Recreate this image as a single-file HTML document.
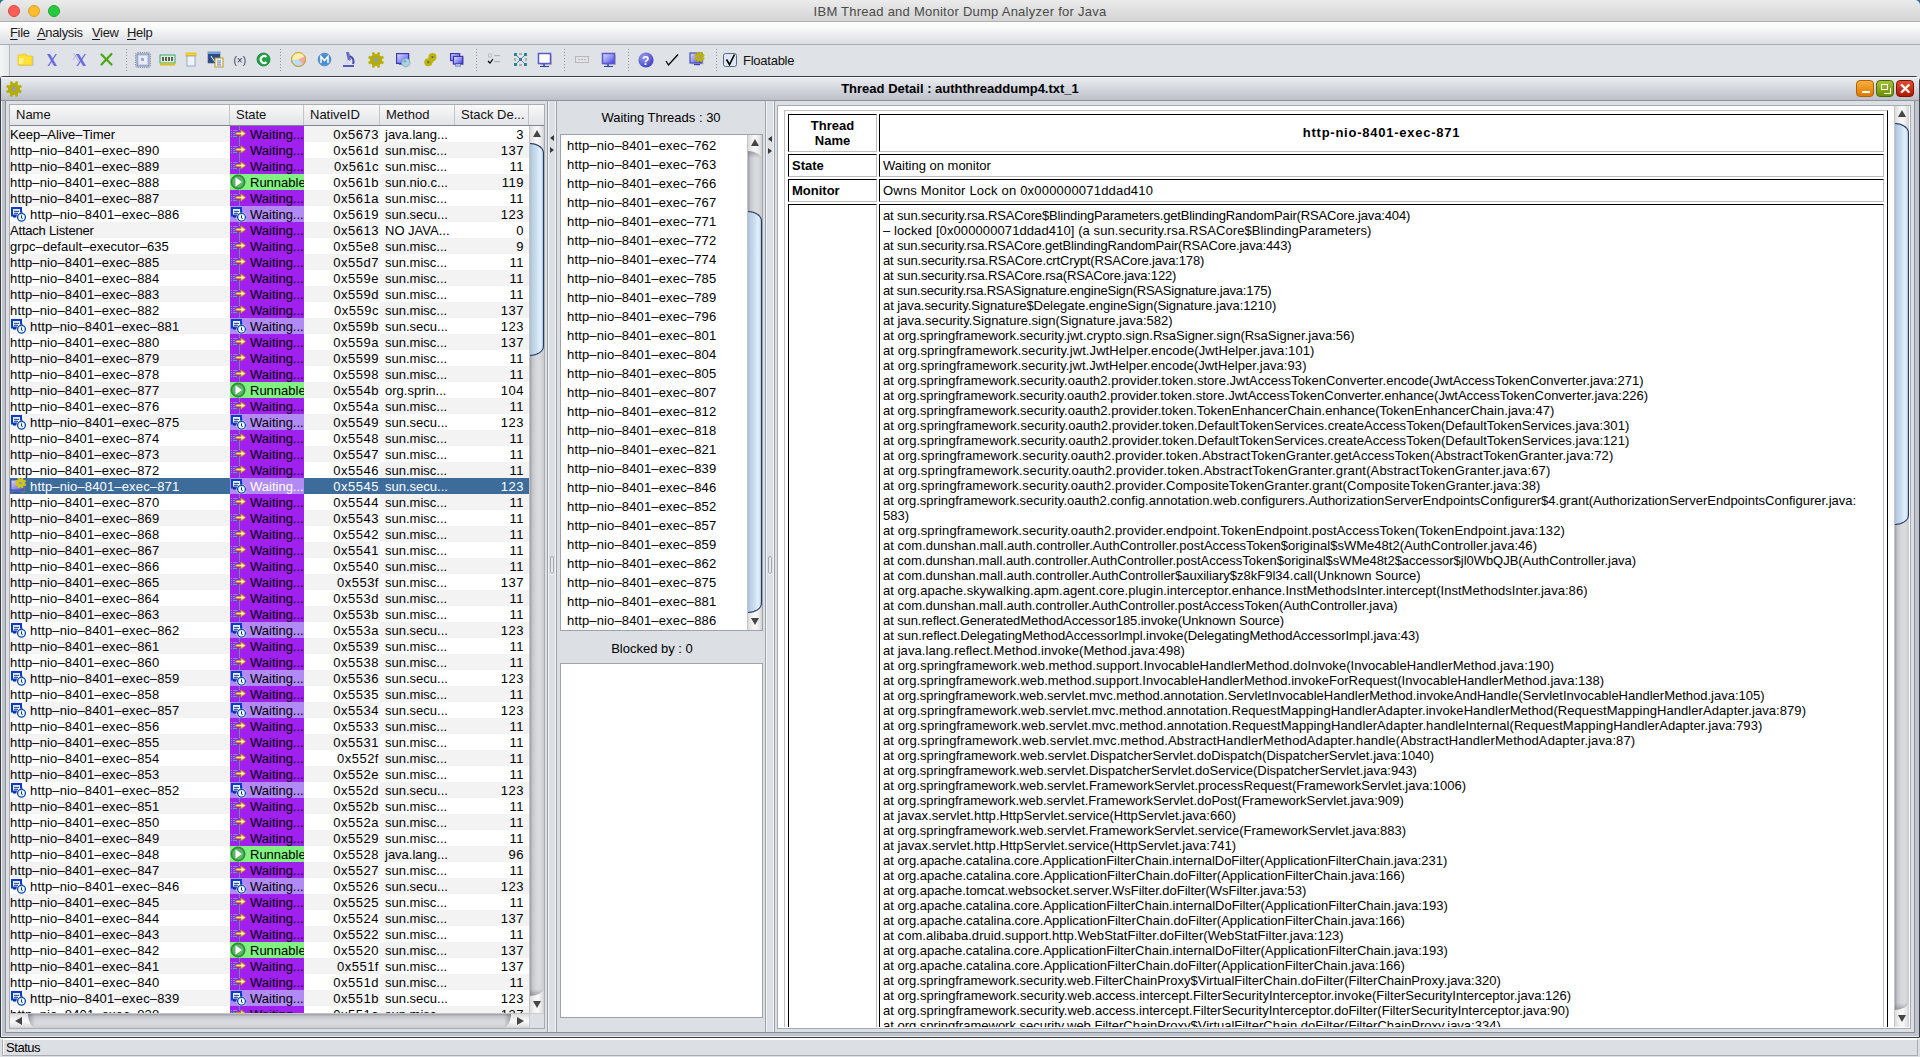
<!DOCTYPE html>
<html><head><meta charset="utf-8"><title>IBM Thread and Monitor Dump Analyzer for Java</title>
<style>
*{margin:0;padding:0;box-sizing:border-box}
html,body{width:1920px;height:1057px;overflow:hidden}
body{position:relative;background:#dfe1e6;font-family:"Liberation Sans",sans-serif;font-size:13px;color:#000}
.a{position:absolute}
#titlebar{left:0;top:0;width:1920px;height:22px;border-radius:5px 5px 0 0;background:linear-gradient(#ebebeb,#d4d4d4);border-bottom:1px solid #b0b0b0}
#titlebar .t{left:0;width:1920px;top:5px;text-align:center;color:#4a4a4a;font-size:13px;letter-spacing:0.25px;line-height:14px}
.tl{position:absolute;top:5px;width:12px;height:12px;border-radius:50%}
#menubar{left:0;top:22px;width:1920px;height:23px;background:linear-gradient(#fdfdfd 0%,#fafafa 25%,#e8eaed 65%,#dcdfe4 100%);border-bottom:1px solid #a9acb2}
.mi{position:absolute;top:3px;line-height:16px;color:#1a1a1a;letter-spacing:-0.35px}
.mi u{text-decoration:underline;text-underline-offset:2px}
#toolbar{left:0;top:45px;width:1920px;height:31px;background:#dfe2e6}
.tsep{position:absolute;top:5px;width:1px;height:22px;background-image:linear-gradient(#8a8e96 50%,transparent 50%);background-size:1px 3px}
.ti{position:absolute;top:7px;width:16px;height:16px}
#frame{left:0;top:76px;width:1920px;height:962px;border:1px solid #3a3d44;border-top-right-radius:5px;border-top-left-radius:3px;background:#dcdfe4}
#fin{left:1px;top:77px;width:1918px;height:960px;background:#bfc3cb;border-left:1px solid #eceef1;border-bottom:1px solid #e8eaee}
#panel{left:5px;top:100px;width:1910px;height:933px;border:1px solid #8a8f98;background:#dcdfe4;border-top-color:#8f949c}
#ftitle{left:1px;top:77px;width:1918px;height:24px;background:linear-gradient(#e9ebef 0%,#d5d8de 45%,#bcc0c9 100%);border-bottom:1px solid #8f949c;border-top:1px solid #f6f7f9}
#ftitle .t{left:0;width:1918px;top:3px;text-align:center;font-weight:bold;line-height:15px}
.fb{position:absolute;top:80px;width:18px;height:17px;border-radius:4px}
/* table */
#lpane{left:9px;top:104px;width:536px;height:925px;border:1px solid #a8acb3;background:#fff}
#thead{left:10px;top:105px;width:534px;height:21px;background:linear-gradient(#fafafa,#f0f0f2 40%,#e2e4e7);border-bottom:1px solid #80858e}
.th{position:absolute;top:0;height:20px;line-height:19px;padding-left:6px;border-right:1px solid #c4c4c4;color:#111}
#tbody{position:absolute;left:10px;top:126px;width:519px;height:887px;overflow:hidden;background:#fff}
.row{position:absolute;left:0;width:519px;height:16px}
.c{position:absolute;top:0;height:16px;line-height:18px;white-space:nowrap;overflow:hidden}
.g{background:#f3f3f3}.wh{background:#fff}
.cn{left:0;width:220px;letter-spacing:0.15px}
.cs{left:220px;width:74px}
.ci{left:294px;width:76px;text-align:right;padding-right:1px;letter-spacing:0.5px}
.cm{left:370px;width:75px}
.cd{left:445px;width:74px;text-align:right;padding-right:5px;letter-spacing:0.5px}
.nt{padding-left:0px}
.nt2{position:absolute;left:20px}
.ico{position:absolute;left:0;top:0}
.sw{background:#a020f0}.sr{background:#80f280}.sm{background:#b18af5}
.sico{position:absolute;left:0;top:0}
.st{position:absolute;left:20px}
.mt{padding-left:5px}
.sel .c{background:#3d6c9a;color:#fff}
.sel .cs{background:#b18af5;color:#fff}
#vsb{left:529px;top:126px;width:15px;height:887px;background:linear-gradient(90deg,#c9ccd1,#eceef0 30%,#f4f4f6 60%,#d9dbdf)}
#hsb{left:10px;top:1013px;width:519px;height:15px;background:linear-gradient(#c9ccd1,#eceef0 30%,#f4f4f6 60%,#d9dbdf)}
#corner{left:529px;top:1013px;width:15px;height:15px;background:#dcdfe4;border-left:1px solid #c8cbd0;border-top:1px solid #c8cbd0}
.thumbv{position:absolute;left:0;width:15px;border:1px solid #2e3f63;border-left:none;border-radius:0 8px 8px 0/0 10px 10px 0;background:linear-gradient(90deg,#a9c0db,#c9dcef 30%,#e4f0fb 70%,#bcd2ea)}
.arr{position:absolute;width:0;height:0}
/* dividers */
.dv{position:absolute;width:1px;background:#9da1a9}
/* middle */
#wtitle{left:556px;top:110px;width:210px;text-align:center;line-height:16px}
#wbox{left:560px;top:134px;width:203px;height:497px;border:1px solid #9ea2aa;background:#fff}
#wlist{position:absolute;left:561px;top:136px;width:186px;height:495px;overflow:hidden}
.li{position:absolute;left:6px;height:19px;line-height:20px;letter-spacing:0.15px;white-space:nowrap}
#btitle{left:537px;top:641px;width:230px;text-align:center;line-height:16px}
#bbox{left:560px;top:663px;width:203px;height:355px;border:1px solid #9ea2aa;background:#fff}
/* right */
#rpane{left:777px;top:105px;width:1134px;height:924px;border:1px solid #a4a8b0;background:#fff}
#rtable{left:785px;top:110px;width:1103px;height:930px;border-top:1px solid #c8c8c8;border-left:1px solid #c8c8c8;border-right:1px solid #000}
.cell{position:absolute;border-top:1px solid #000;border-left:1px solid #000;border-right:1px solid #bdbdbd;border-bottom:1px solid #bdbdbd}
#stack{position:absolute;left:105px;top:102px;width:1000px;height:1000px}
.sl{position:absolute;left:0;height:15px;line-height:15px;white-space:nowrap}
#rvsb{left:1894px;top:106px;width:15px;height:922px;background:linear-gradient(90deg,#c9ccd1,#eceef0 30%,#f4f4f6 60%,#d9dbdf)}
/* status */
#status{left:0;top:1038px;width:1920px;height:19px;background:#dcdfe4;border-top:1px solid #fff}
#status .box{left:2px;top:0;width:1916px;height:17px;border-left:1px solid #a8acb2;border-top:1px solid #fff;border-right:1px solid #a8acb2;border-bottom:1px solid #a8acb2;box-shadow:inset 1px 0 0 #fff}

</style></head><body>
<svg width="0" height="0" style="position:absolute">
<defs>
<linearGradient id="gor" x1="0" y1="0" x2="0" y2="1"><stop offset="0" stop-color="#fff4c0"/><stop offset="1" stop-color="#e8a010"/></linearGradient>
<symbol id="iwait" viewBox="0 0 16 16">
<path d="M9.5 0 V4.5 M9.5 10 V16" stroke="#6a8aa0" stroke-width="1"/>
 <g fill="#58a8d8"><rect x="1" y="4" width="1" height="1"/><rect x="1" y="6" width="1" height="1"/><rect x="1" y="8" width="1" height="1"/><rect x="1" y="10" width="1" height="1"/></g>
 <g fill="#58a8b0"><rect x="3" y="4" width="4" height="1"/><rect x="3" y="6" width="2" height="1"/><rect x="3" y="8" width="2" height="1"/><rect x="3" y="10" width="4" height="1"/></g>
 <path d="M6 6.5 H11 V4 L15.5 7.5 L11 11 V8.5 H6 Z" fill="#fff4b8" stroke="#d08800" stroke-width="1" stroke-linejoin="miter"/>
</symbol>
<symbol id="irun" viewBox="0 0 16 16">
 <circle cx="8" cy="8" r="7" fill="#3c9a4a" stroke="#2a7a36" stroke-width="1"/>
 <circle cx="8" cy="8" r="5.5" fill="#5cb864"/>
 <path d="M5.5 3.5 L12 8 L5.5 12.5 Z" fill="#fff"/>
</symbol>
<symbol id="imon" viewBox="0 0 16 16">
<rect x="2" y="2" width="9" height="7.5" fill="#e4fcff" stroke="#0a3ccc" stroke-width="2"/>
 <rect x="3" y="10" width="3.5" height="1.5" fill="#0a2a9a"/>
 <rect x="4" y="4.8" width="5" height="1" fill="#2a2a88"/><rect x="4" y="6.8" width="4" height="1" fill="#2a2a88"/>
 <circle cx="11.5" cy="11.3" r="5" fill="#fff"/>
 <path d="M10.2 5.8 L12.8 8.2 M12.8 5.8 L10.2 8.2" stroke="#0a48a8" stroke-width="0.9"/>
 <circle cx="11.5" cy="11.3" r="3.9" fill="#eefaff" stroke="#0a48a8" stroke-width="1.3"/>
 <path d="M11.5 9.3 V11.9 L12.6 13" stroke="#0a2a80" stroke-width="1" fill="none"/>
</symbol>
<symbol id="iselmon" viewBox="0 0 16 16">
<rect x="2" y="3" width="13" height="12" fill="#888" opacity="0.35"/>
 <defs><linearGradient id="gscr" x1="0" y1="0" x2="1" y2="1"><stop offset="0" stop-color="#e0e0ff"/><stop offset="0.6" stop-color="#8a8af0"/><stop offset="1" stop-color="#5050d8"/></linearGradient></defs>
 <rect x="1" y="2" width="12" height="10" fill="url(#gscr)" stroke="#4848c0" stroke-width="1"/>
 <rect x="6" y="12" width="2" height="2" fill="#4a60c0"/><rect x="3" y="14" width="8" height="1" fill="#2a50c8"/>
 <circle cx="10.5" cy="5" r="4.2" fill="#d0c818"/>
 <rect x="9.4" y="-0.5999999999999996" width="2.2" height="5.6" fill="#d0c818" transform="rotate(22.5 10.5 5)"/>
 <rect x="9.4" y="-0.5999999999999996" width="2.2" height="5.6" fill="#d0c818" transform="rotate(67.5 10.5 5)"/>
 <rect x="9.4" y="-0.5999999999999996" width="2.2" height="5.6" fill="#d0c818" transform="rotate(112.5 10.5 5)"/>
 <rect x="9.4" y="-0.5999999999999996" width="2.2" height="5.6" fill="#d0c818" transform="rotate(157.5 10.5 5)"/>
 <rect x="9.4" y="-0.5999999999999996" width="2.2" height="5.6" fill="#d0c818" transform="rotate(202.5 10.5 5)"/>
 <rect x="9.4" y="-0.5999999999999996" width="2.2" height="5.6" fill="#d0c818" transform="rotate(247.5 10.5 5)"/>
 <rect x="9.4" y="-0.5999999999999996" width="2.2" height="5.6" fill="#d0c818" transform="rotate(292.5 10.5 5)"/>
 <rect x="9.4" y="-0.5999999999999996" width="2.2" height="5.6" fill="#d0c818" transform="rotate(337.5 10.5 5)"/>
 <circle cx="10.5" cy="5" r="1.3" fill="#8a90c0"/>
</symbol>
<symbol id="igear" viewBox="0 0 16 16">
 <circle cx="8" cy="8" r="6" fill="#b5ad00"/>
 <rect x="6.7" y="0" width="2.6" height="8" fill="#b5ad00" transform="rotate(22.5 8 8)"/>
 <rect x="6.7" y="0" width="2.6" height="8" fill="#b5ad00" transform="rotate(67.5 8 8)"/>
 <rect x="6.7" y="0" width="2.6" height="8" fill="#b5ad00" transform="rotate(112.5 8 8)"/>
 <rect x="6.7" y="0" width="2.6" height="8" fill="#b5ad00" transform="rotate(157.5 8 8)"/>
 <rect x="6.7" y="0" width="2.6" height="8" fill="#b5ad00" transform="rotate(202.5 8 8)"/>
 <rect x="6.7" y="0" width="2.6" height="8" fill="#b5ad00" transform="rotate(247.5 8 8)"/>
 <rect x="6.7" y="0" width="2.6" height="8" fill="#b5ad00" transform="rotate(292.5 8 8)"/>
 <rect x="6.7" y="0" width="2.6" height="8" fill="#b5ad00" transform="rotate(337.5 8 8)"/>
 <rect x="6.0" y="6.0" width="4" height="4" fill="#9a9ca4"/>
</symbol>
</defs>
</svg>
<div class="a" style="left:0;top:0;width:6px;height:6px;background:#2a6896"></div><div class="a" style="left:1914px;top:0;width:6px;height:6px;background:#2a6896"></div>
<div id="titlebar" class="a">
 <div class="tl" style="left:8px;background:#fc5f57;border:1px solid #e0443e"></div>
 <div class="tl" style="left:28px;background:#fdbc2e;border:1px solid #dea123"></div>
 <div class="tl" style="left:48px;background:#28c840;border:1px solid #1aab29"></div>
 <div class="a t">IBM Thread and Monitor Dump Analyzer for Java</div>
</div>
<div id="menubar" class="a">
 <div class="mi" style="left:10px"><u>F</u>ile</div>
 <div class="mi" style="left:37px"><u>A</u>nalysis</div>
 <div class="mi" style="left:92px"><u>V</u>iew</div>
 <div class="mi" style="left:127px"><u>H</u>elp</div>
</div>
<div id="toolbar" class="a">
 <div class="a" style="left:0;top:0;width:10px;height:31px;background:linear-gradient(90deg,#f4f5f7,#e6e8eb);border-right:1px solid #b4b8c0"></div>
</div>
<div id="frame" class="a"></div>
<div id="fin" class="a"></div>
<div id="panel" class="a"></div>
<div id="ftitle" class="a">
 <svg class="a" style="left:5px;top:3px" width="16" height="16"><use href="#igear"/></svg>
 <div class="a t">Thread Detail : auththreaddump4.txt_1</div>
</div>
<div class="fb" style="left:1856px;background:linear-gradient(#f4b040,#e07a00);border:1px solid #b06000"><div class="a" style="left:5px;top:10px;width:8px;height:2px;background:#fff"></div></div>
<div class="fb" style="left:1876px;background:linear-gradient(#a8c040,#6a9000);border:1px solid #4a6a00"><div class="a" style="left:4px;top:3px;width:7px;height:6px;border:1.5px solid #fff"></div><div class="a" style="left:7px;top:7px;width:7px;height:6px;border-right:1.5px solid #fff;border-bottom:1.5px solid #fff"></div></div>
<div class="fb" style="left:1896px;background:linear-gradient(#e05030,#b01800);border:1px solid #801000;color:#fff;font-weight:bold;font-size:15px;line-height:15px;text-align:center">&#x2715;</div>

<div id="lpane" class="a"></div>
<div id="thead" class="a">
 <div class="th" style="left:0;width:220px">Name</div>
 <div class="th" style="left:220px;width:74px">State</div>
 <div class="th" style="left:294px;width:76px">NativeID</div>
 <div class="th" style="left:370px;width:75px">Method</div>
 <div class="th" style="left:445px;width:74px">Stack De...</div>
</div>
<div class="a" style="left:529px;top:126px;width:15px;height:887px;background:linear-gradient(90deg,#dcdcdc,#f4f4f4 35%,#f8f8f8 55%,#e4e4e4 85%,#d0d0d0);border-left:1px solid #c4c4c4;overflow:hidden"><div class="a" style="left:0;top:17px;width:14px;height:853px;background:linear-gradient(180deg,rgba(60,62,70,.35),rgba(60,62,70,0) 7px,rgba(60,62,70,0) calc(100% - 7px),rgba(60,62,70,.35)),linear-gradient(90deg,#9c9ea4,#c4c6cb 18%,#d6d8dc 45%,#d9dbde 70%,#c9cbcf);border-radius:0 14px 14px 0/0 9px 9px 0"></div><div class="a" style="left:0;top:17px;width:14px;height:213px;background:linear-gradient(90deg,#a8bfd8,#bcd1e7 20%,#c8dcef 45%,#e2f0fb 78%,#cfe2f3 92%,#9fb8d4);border:1px solid #233a64;border-left:none;border-radius:0 14px 14px 0/0 10px 10px 0"></div><div class="arr" style="left:3px;top:4px;border-left:4px solid transparent;border-right:4px solid transparent;border-bottom:7px solid #454545"></div><div class="arr" style="left:3px;top:875px;border-left:4px solid transparent;border-right:4px solid transparent;border-top:7px solid #454545"></div></div>
<div class="a" style="left:10px;top:1013px;width:519px;height:15px;background:linear-gradient(#dcdcdc,#f4f4f4 35%,#f8f8f8 55%,#e4e4e4 85%,#d0d0d0);border-top:1px solid #c4c4c4;overflow:hidden"><div class="a" style="left:18px;top:0;width:483px;height:14px;background:linear-gradient(90deg,rgba(60,62,70,.35),rgba(60,62,70,0) 7px,rgba(60,62,70,0) calc(100% - 7px),rgba(60,62,70,.35)),linear-gradient(#9c9ea4,#c4c6cb 18%,#d6d8dc 45%,#d9dbde 70%,#c9cbcf);border-radius:0 0 9px 9px/0 0 14px 14px"></div><div class="arr" style="left:5px;top:3px;border-top:4px solid transparent;border-bottom:4px solid transparent;border-right:7px solid #454545"></div><div class="arr" style="left:507px;top:3px;border-top:4px solid transparent;border-bottom:4px solid transparent;border-left:7px solid #454545"></div></div>
<div id="corner" class="a"></div>

<div class="dv" style="left:547px;top:101px;height:931px"></div>
<div class="a" style="left:548px;top:101px;width:1px;height:931px;background:#f2f3f5"></div>
<div class="a" style="left:555px;top:101px;width:1px;height:931px;background:#f2f3f5"></div>
<div class="dv" style="left:556px;top:101px;height:931px"></div>
<div class="a" style="left:550px;top:556px;width:4px;height:18px;border:1px solid #a4a8b0;border-radius:2px;background:#e6e8ec;box-shadow:0 1px 0 #fff"></div>
<div class="arr" style="left:550px;top:135px;border-top:3px solid transparent;border-bottom:3px solid transparent;border-right:4px solid #3a3a3a"></div>
<div class="arr" style="left:550px;top:147px;border-top:3px solid transparent;border-bottom:3px solid transparent;border-left:4px solid #3a3a3a"></div>

<div id="wtitle" class="a">Waiting Threads : 30</div>
<div id="wbox" class="a"></div>
<div class="a" style="left:747px;top:135px;width:15px;height:495px;background:linear-gradient(90deg,#dcdcdc,#f4f4f4 35%,#f8f8f8 55%,#e4e4e4 85%,#d0d0d0);border-left:1px solid #c4c4c4;overflow:hidden"><div class="a" style="left:0;top:16px;width:14px;height:462px;background:linear-gradient(180deg,rgba(60,62,70,.35),rgba(60,62,70,0) 7px,rgba(60,62,70,0) calc(100% - 7px),rgba(60,62,70,.35)),linear-gradient(90deg,#9c9ea4,#c4c6cb 18%,#d6d8dc 45%,#d9dbde 70%,#c9cbcf);border-radius:0 14px 14px 0/0 9px 9px 0"></div><div class="a" style="left:0;top:76px;width:14px;height:402px;background:linear-gradient(90deg,#a8bfd8,#bcd1e7 20%,#c8dcef 45%,#e2f0fb 78%,#cfe2f3 92%,#9fb8d4);border:1px solid #233a64;border-left:none;border-radius:0 14px 14px 0/0 10px 10px 0"></div><div class="arr" style="left:3px;top:4px;border-left:4px solid transparent;border-right:4px solid transparent;border-bottom:7px solid #454545"></div><div class="arr" style="left:3px;top:483px;border-left:4px solid transparent;border-right:4px solid transparent;border-top:7px solid #454545"></div></div>
<div id="btitle" class="a">Blocked by : 0</div>
<div id="bbox" class="a"></div>

<div class="dv" style="left:765px;top:101px;height:931px"></div>
<div class="a" style="left:766px;top:101px;width:1px;height:931px;background:#f2f3f5"></div>
<div class="a" style="left:773px;top:101px;width:1px;height:931px;background:#f2f3f5"></div>
<div class="dv" style="left:774px;top:101px;height:931px"></div>
<div class="a" style="left:768px;top:556px;width:4px;height:18px;border:1px solid #a4a8b0;border-radius:2px;background:#e6e8ec;box-shadow:0 1px 0 #fff"></div>
<div class="arr" style="left:768px;top:136px;border-top:3px solid transparent;border-bottom:3px solid transparent;border-right:4px solid #3a3a3a"></div>
<div class="arr" style="left:768px;top:148px;border-top:3px solid transparent;border-bottom:3px solid transparent;border-left:4px solid #3a3a3a"></div>

<div class="a" style="left:0;top:45px;width:800px;height:31px">
<svg width="800" height="31" style="position:absolute;left:0;top:0" viewBox="0 45 800 31">
 <!-- separators -->
 <g fill="#8c9098">
 <rect x="126" y="49" width="1" height="1"/><rect x="126" y="52" width="1" height="1"/><rect x="126" y="55" width="1" height="1"/><rect x="126" y="58" width="1" height="1"/><rect x="126" y="61" width="1" height="1"/><rect x="126" y="64" width="1" height="1"/><rect x="126" y="67" width="1" height="1"/><rect x="126" y="70" width="1" height="1"/>
 <rect x="280" y="49" width="1" height="1"/><rect x="280" y="52" width="1" height="1"/><rect x="280" y="55" width="1" height="1"/><rect x="280" y="58" width="1" height="1"/><rect x="280" y="61" width="1" height="1"/><rect x="280" y="64" width="1" height="1"/><rect x="280" y="67" width="1" height="1"/><rect x="280" y="70" width="1" height="1"/>
 <rect x="476" y="49" width="1" height="1"/><rect x="476" y="52" width="1" height="1"/><rect x="476" y="55" width="1" height="1"/><rect x="476" y="58" width="1" height="1"/><rect x="476" y="61" width="1" height="1"/><rect x="476" y="64" width="1" height="1"/><rect x="476" y="67" width="1" height="1"/><rect x="476" y="70" width="1" height="1"/>
 <rect x="564" y="49" width="1" height="1"/><rect x="564" y="52" width="1" height="1"/><rect x="564" y="55" width="1" height="1"/><rect x="564" y="58" width="1" height="1"/><rect x="564" y="61" width="1" height="1"/><rect x="564" y="64" width="1" height="1"/><rect x="564" y="67" width="1" height="1"/><rect x="564" y="70" width="1" height="1"/>
 <rect x="628" y="49" width="1" height="1"/><rect x="628" y="52" width="1" height="1"/><rect x="628" y="55" width="1" height="1"/><rect x="628" y="58" width="1" height="1"/><rect x="628" y="61" width="1" height="1"/><rect x="628" y="64" width="1" height="1"/><rect x="628" y="67" width="1" height="1"/><rect x="628" y="70" width="1" height="1"/>
 <rect x="716" y="49" width="1" height="1"/><rect x="716" y="52" width="1" height="1"/><rect x="716" y="55" width="1" height="1"/><rect x="716" y="58" width="1" height="1"/><rect x="716" y="61" width="1" height="1"/><rect x="716" y="64" width="1" height="1"/><rect x="716" y="67" width="1" height="1"/><rect x="716" y="70" width="1" height="1"/>
 </g>
 <!-- folder -->
 <rect x="19.5" y="56" width="14" height="10" fill="#8a8ea0" opacity="0.35"/>
 <path d="M18 55 H22 L23 54 H26 L27 56 H32 V65 H18 Z" fill="#ffe13a" stroke="#f0c800" stroke-width="0.8"/>
 <path d="M19 58 H24 L22 64 H19 Z" fill="#fff3a0" opacity="0.8"/>
 <!-- blue X -->
 <path d="M47 54 H50 L57 66 H54 Z" fill="#6b6be0"/>
 <path d="M55.5 54 H57 L49 66 H47.5 Z" fill="#6b6be0"/>
 <!-- XX -->
 <path d="M73 54 H74.5 L79 62" stroke="#a8a8f0" stroke-width="0.8" fill="none"/>
 <path d="M77 54 L73 60" stroke="#a8a8f0" stroke-width="0.8" fill="none"/>
 <path d="M76 54 H79 L86 66 H83 Z" fill="#6b6be0"/>
 <path d="M84.5 54 H86 L78 66 H76.5 Z" fill="#6b6be0"/>
 <!-- green X -->
 <path d="M101.5 54.5 L111.5 64.5 M111.5 54 L101.5 64.5" stroke="#48a810" stroke-width="2.2" fill="none" stroke-linecap="round"/>
 <!-- chip -->
 <rect x="135.5" y="52.5" width="15" height="15" fill="none" stroke="#7a7a7a" stroke-width="0.8" stroke-dasharray="1.2 1" rx="2"/>
 <rect x="137" y="54" width="12" height="12" fill="#c8d4e8" stroke="#5a6ab0" stroke-width="0.8"/>
 <rect x="139" y="56" width="8" height="8" fill="#e8eef8"/>
 <rect x="141" y="58" width="3" height="3" fill="#a0a8c0"/>
 <!-- memory -->
 <rect x="160" y="55" width="15" height="8" fill="#d8f0d8" stroke="#30a878" stroke-width="1"/>
 <g fill="#606060"><rect x="162" y="57" width="2" height="4"/><rect x="165" y="57" width="2" height="4"/><rect x="168" y="57" width="2" height="4"/><rect x="171" y="57" width="2" height="4"/></g>
 <rect x="160" y="63" width="15" height="2.5" fill="#d8c020"/>
 <!-- beaker -->
 <rect x="186" y="53" width="10" height="3" fill="#f8d820" stroke="#d0b000" stroke-width="0.6"/>
 <rect x="187" y="56" width="8" height="10" fill="#eef4fc" stroke="#8a9ab8" stroke-width="0.8"/>
 <!-- window list -->
 <rect x="208" y="52" width="12" height="11" fill="#2a4a88" stroke="#4a5a70" stroke-width="0.6"/>
 <rect x="208" y="52" width="12" height="2" fill="#70a0e0"/>
 <path d="M211 56 L215 62" stroke="#fff" stroke-width="1"/>
 <rect x="215" y="58" width="8" height="9" fill="#f4f0e0" stroke="#b89a30" stroke-width="1"/>
 <g fill="#3a6ab0"><rect x="217" y="60.5" width="4" height="0.8"/><rect x="217" y="62.5" width="4" height="0.8"/><rect x="217" y="64.5" width="4" height="0.8"/></g>
 <!-- (x) -->
 <text x="233.5" y="63.5" font-family="Liberation Sans" font-size="10" fill="#2a3a5a">(×)</text>
 <!-- C -->
 <circle cx="263.5" cy="59.5" r="6.5" fill="#20a040" stroke="#108030" stroke-width="0.8"/>
 <path d="M266.5 56.8 A3.5 3.5 0 1 0 266.5 62.2" stroke="#fff" stroke-width="2.2" fill="none"/>
 <!-- pie -->
 <circle cx="298.5" cy="59.5" r="7" fill="#bcdcf4" stroke="#c8a040" stroke-width="1"/>
 <path d="M298.5 59.5 L291.5 59.5 A7 7 0 0 1 304.7 56.2 Z" fill="#fff0a8"/>
 <path d="M298.5 59.5 L304.7 56.2 A7 7 0 0 1 303.5 64.4 Z" fill="#f0a8a0"/>
 <circle cx="298.5" cy="59.5" r="7" fill="none" stroke="#c8a040" stroke-width="1"/>
 <!-- M -->
 <circle cx="324.5" cy="59.5" r="6.3" fill="#5a9ad8" stroke="#3a7ac0" stroke-width="0.8"/>
 <circle cx="324.5" cy="59.5" r="5" fill="#4a8ad0"/>
 <path d="M321 63 V56.5 L324.5 60.5 L328 56.5 V63" stroke="#fff" stroke-width="1.5" fill="none"/>
 <!-- microscope -->
 <path d="M346 52 L349 52 L351 60 L348 61 Z" fill="#6a6ac8"/>
 <path d="M350 56 Q355 59 353 64" stroke="#4848b0" stroke-width="2" fill="none"/>
 <rect x="345" y="60" width="4" height="4" fill="#d8d8e8"/>
 <rect x="343" y="65" width="11" height="2" fill="#5858c0"/>
 <!-- gear -->
 <circle cx="376" cy="60" r="6" fill="#b5ad00"/>
 <rect x="374.7" y="52" width="2.6" height="8" fill="#b5ad00" transform="rotate(22.5 376 60)"/>
 <rect x="374.7" y="52" width="2.6" height="8" fill="#b5ad00" transform="rotate(67.5 376 60)"/>
 <rect x="374.7" y="52" width="2.6" height="8" fill="#b5ad00" transform="rotate(112.5 376 60)"/>
 <rect x="374.7" y="52" width="2.6" height="8" fill="#b5ad00" transform="rotate(157.5 376 60)"/>
 <rect x="374.7" y="52" width="2.6" height="8" fill="#b5ad00" transform="rotate(202.5 376 60)"/>
 <rect x="374.7" y="52" width="2.6" height="8" fill="#b5ad00" transform="rotate(247.5 376 60)"/>
 <rect x="374.7" y="52" width="2.6" height="8" fill="#b5ad00" transform="rotate(292.5 376 60)"/>
 <rect x="374.7" y="52" width="2.6" height="8" fill="#b5ad00" transform="rotate(337.5 376 60)"/>
 <rect x="374.0" y="58.0" width="4" height="4" fill="#9a9ca4"/>
 <!-- monitor magnifier -->
 <defs>
  <linearGradient id="gmon" x1="0" y1="0" x2="1" y2="1"><stop offset="0" stop-color="#e4dcff"/><stop offset="0.55" stop-color="#9090f0"/><stop offset="1" stop-color="#3838d8"/></linearGradient>
 </defs>
 <rect x="397.5" y="54.5" width="12" height="10" fill="#7a7a80" opacity="0.35"/>
 <rect x="396.6" y="53.6" width="12" height="9.8" fill="url(#gmon)" stroke="#3838b0" stroke-width="1.2"/>
 <rect x="399" y="64" width="4" height="1" fill="#6080c0"/>
 <circle cx="405.8" cy="62.6" r="4.2" fill="#a8d4e4" stroke="#8aa0b0" stroke-width="0.8"/>
 <circle cx="404.8" cy="61.2" r="1.5" fill="#70b0d8"/>
 <!-- chain -->
 <g fill="#bdb400">
 <circle cx="432.5" cy="57" r="4"/><circle cx="428.3" cy="62.2" r="4"/>
 <rect x="429" y="55" width="5" height="9" transform="rotate(40 430.4 59.6)"/>
 </g>
 <circle cx="432.5" cy="57" r="1.1" fill="#5a5a90"/><circle cx="428.3" cy="62.2" r="1.1" fill="#5a5a90"/>
 <!-- multi window -->
 <rect x="450.6" y="53.6" width="9" height="7" fill="url(#gmon)" stroke="#3838b0" stroke-width="1.2"/>
 <rect x="454" y="57" width="10" height="8" fill="#7a7a80" opacity="0.35"/>
 <rect x="453.4" y="56.4" width="9.3" height="7.6" fill="url(#gmon)" stroke="#3838b0" stroke-width="1.2"/>
 <rect x="456" y="64.5" width="4" height="1.5" fill="#fff"/><rect x="455" y="65.5" width="6" height="1" fill="#5070c0"/>
 <!-- checklist -->
 <rect x="488.5" y="54" width="3" height="3" fill="none" stroke="#b8b8b8" stroke-width="0.8"/>
 <rect x="494" y="55" width="6" height="1.2" fill="#b4b4b4"/>
 <rect x="494" y="61" width="6" height="1.2" fill="#b4b4b4"/>
 <path d="M488 61 L490 63 L493 59" stroke="#000" stroke-width="1.2" fill="none"/>
 <!-- grid -->
 <g fill="#2a8a90"><rect x="514" y="53" width="3" height="3"/><rect x="524" y="53" width="3" height="3"/><rect x="514" y="63" width="3" height="3"/><rect x="524" y="63" width="3" height="3"/><rect x="519" y="58" width="3" height="3"/></g>
 <path d="M515 54 L526 65 M526 54 L515 65" stroke="#3a6ab0" stroke-width="0.8"/>
 <g fill="#b0b0b0"><rect x="519" y="53" width="3" height="2"/><rect x="519" y="64" width="3" height="2"/><rect x="514" y="58" width="2" height="3"/><rect x="525" y="58" width="2" height="3"/></g>
 <!-- monitor -->
 <rect x="540" y="55" width="12" height="10" fill="#7a7a80" opacity="0.35"/>
 <rect x="538.5" y="53.5" width="12" height="10" fill="#fff" stroke="#5a5ac8" stroke-width="1.5"/>
 <rect x="543" y="64" width="2" height="2" fill="#5a5ac8"/><rect x="540" y="66" width="9" height="1" fill="#2a40b0"/>
 <!-- gray field -->
 <rect x="575.5" y="56.5" width="13" height="6" fill="none" stroke="#b8b8b8" stroke-width="1"/>
 <g fill="#b8b8b8"><rect x="578" y="59" width="2" height="1"/><rect x="581" y="59" width="2" height="1"/><rect x="584" y="59" width="2" height="1"/></g>
 <!-- blue monitor -->
 <rect x="604" y="55" width="12" height="10" fill="#7a7a80" opacity="0.35"/>
 <rect x="602.5" y="53.5" width="12" height="10" fill="url(#gmon)" stroke="#5a5ac8" stroke-width="1.5"/>
 <rect x="607" y="64" width="2" height="2" fill="#5a5ac8"/><rect x="604" y="66" width="9" height="1" fill="#2a40b0"/>
 <!-- help -->
 <defs><radialGradient id="ghelp" cx="0.35" cy="0.3" r="0.8"><stop offset="0" stop-color="#9a9af0"/><stop offset="1" stop-color="#3a3ac0"/></radialGradient></defs>
 <circle cx="646" cy="60" r="7.6" fill="url(#ghelp)"/>
 <text x="642" y="64.5" font-family="Liberation Sans" font-weight="bold" font-size="12" fill="#fff">?</text>
 <!-- check -->
 <path d="M666 61 L668.5 65 L678 54.5" stroke="#000" stroke-width="1.3" fill="none"/>
 <!-- monitor gear -->
 <rect x="691.5" y="54.5" width="12" height="10" fill="#7a7a80" opacity="0.35"/>
 <rect x="690" y="53" width="12" height="10" fill="url(#gmon)" stroke="#4a50b8" stroke-width="1.2"/>
 <rect x="694" y="64" width="6" height="1.2" fill="#3a40b0"/>
 <circle cx="699.5" cy="57" r="4" fill="#bdb400"/>
 <rect x="698.5" y="51.8" width="2" height="5.2" fill="#bdb400" transform="rotate(22.5 699.5 57)"/>
 <rect x="698.5" y="51.8" width="2" height="5.2" fill="#bdb400" transform="rotate(67.5 699.5 57)"/>
 <rect x="698.5" y="51.8" width="2" height="5.2" fill="#bdb400" transform="rotate(112.5 699.5 57)"/>
 <rect x="698.5" y="51.8" width="2" height="5.2" fill="#bdb400" transform="rotate(157.5 699.5 57)"/>
 <rect x="698.5" y="51.8" width="2" height="5.2" fill="#bdb400" transform="rotate(202.5 699.5 57)"/>
 <rect x="698.5" y="51.8" width="2" height="5.2" fill="#bdb400" transform="rotate(247.5 699.5 57)"/>
 <rect x="698.5" y="51.8" width="2" height="5.2" fill="#bdb400" transform="rotate(292.5 699.5 57)"/>
 <rect x="698.5" y="51.8" width="2" height="5.2" fill="#bdb400" transform="rotate(337.5 699.5 57)"/>
 <circle cx="699.5" cy="57" r="1.3" fill="#9a9ac0"/>
 <!-- checkbox -->
 <rect x="723.5" y="53.5" width="13" height="13" rx="2" fill="#dde6f2" stroke="#5a6a80" stroke-width="1"/>
 <path d="M726.5 59.5 L729.5 64.5 L734.5 54.5" stroke="#000" stroke-width="1.6" fill="none"/>
</svg>
<div class="a" style="left:743px;top:8px;line-height:16px;color:#111;letter-spacing:-0.25px">Floatable</div>
</div>
<div id="tbody">
<div class="row" style="top:0px"><div class="c cn g"><span class="nt" style="letter-spacing:-0.05px">Keep–Alive–Timer</span></div><div class="c cs sw"><svg class="sico" width="16" height="16"><use href="#iwait"/></svg><span class="st">Waiting...</span></div><div class="c ci g"><span class="nid">0x5673</span></div><div class="c cm wh"><span class="mt">java.lang...</span></div><div class="c cd wh"><span class="dp">3</span></div></div>
<div class="row" style="top:16px"><div class="c cn wh"><span class="nt">http–nio–8401–exec–890</span></div><div class="c cs sw"><svg class="sico" width="16" height="16"><use href="#iwait"/></svg><span class="st">Waiting...</span></div><div class="c ci wh"><span class="nid">0x561d</span></div><div class="c cm g"><span class="mt">sun.misc...</span></div><div class="c cd g"><span class="dp">137</span></div></div>
<div class="row" style="top:32px"><div class="c cn g"><span class="nt">http–nio–8401–exec–889</span></div><div class="c cs sw"><svg class="sico" width="16" height="16"><use href="#iwait"/></svg><span class="st">Waiting...</span></div><div class="c ci g"><span class="nid">0x561c</span></div><div class="c cm wh"><span class="mt">sun.misc...</span></div><div class="c cd wh"><span class="dp">11</span></div></div>
<div class="row" style="top:48px"><div class="c cn wh"><span class="nt">http–nio–8401–exec–888</span></div><div class="c cs sr"><svg class="sico" width="16" height="16"><use href="#irun"/></svg><span class="st">Runnable</span></div><div class="c ci wh"><span class="nid">0x561b</span></div><div class="c cm g"><span class="mt">sun.nio.c...</span></div><div class="c cd g"><span class="dp">119</span></div></div>
<div class="row" style="top:64px"><div class="c cn g"><span class="nt">http–nio–8401–exec–887</span></div><div class="c cs sw"><svg class="sico" width="16" height="16"><use href="#iwait"/></svg><span class="st">Waiting...</span></div><div class="c ci g"><span class="nid">0x561a</span></div><div class="c cm wh"><span class="mt">sun.misc...</span></div><div class="c cd wh"><span class="dp">11</span></div></div>
<div class="row" style="top:80px"><div class="c cn wh"><svg class="ico" width="16" height="16"><use href="#imon"/></svg><span class="nt2">http–nio–8401–exec–886</span></div><div class="c cs sm"><svg class="sico" width="16" height="16"><use href="#imon"/></svg><span class="st">Waiting...</span></div><div class="c ci wh"><span class="nid">0x5619</span></div><div class="c cm g"><span class="mt">sun.secu...</span></div><div class="c cd g"><span class="dp">123</span></div></div>
<div class="row" style="top:96px"><div class="c cn g"><span class="nt" style="letter-spacing:-0.2px">Attach Listener</span></div><div class="c cs sw"><svg class="sico" width="16" height="16"><use href="#iwait"/></svg><span class="st">Waiting...</span></div><div class="c ci g"><span class="nid">0x5613</span></div><div class="c cm wh"><span class="mt">NO JAVA...</span></div><div class="c cd wh"><span class="dp">0</span></div></div>
<div class="row" style="top:112px"><div class="c cn wh"><span class="nt" style="letter-spacing:0.05px">grpc–default–executor–635</span></div><div class="c cs sw"><svg class="sico" width="16" height="16"><use href="#iwait"/></svg><span class="st">Waiting...</span></div><div class="c ci wh"><span class="nid">0x55e8</span></div><div class="c cm g"><span class="mt">sun.misc...</span></div><div class="c cd g"><span class="dp">9</span></div></div>
<div class="row" style="top:128px"><div class="c cn g"><span class="nt">http–nio–8401–exec–885</span></div><div class="c cs sw"><svg class="sico" width="16" height="16"><use href="#iwait"/></svg><span class="st">Waiting...</span></div><div class="c ci g"><span class="nid">0x55d7</span></div><div class="c cm wh"><span class="mt">sun.misc...</span></div><div class="c cd wh"><span class="dp">11</span></div></div>
<div class="row" style="top:144px"><div class="c cn wh"><span class="nt">http–nio–8401–exec–884</span></div><div class="c cs sw"><svg class="sico" width="16" height="16"><use href="#iwait"/></svg><span class="st">Waiting...</span></div><div class="c ci wh"><span class="nid">0x559e</span></div><div class="c cm g"><span class="mt">sun.misc...</span></div><div class="c cd g"><span class="dp">11</span></div></div>
<div class="row" style="top:160px"><div class="c cn g"><span class="nt">http–nio–8401–exec–883</span></div><div class="c cs sw"><svg class="sico" width="16" height="16"><use href="#iwait"/></svg><span class="st">Waiting...</span></div><div class="c ci g"><span class="nid">0x559d</span></div><div class="c cm wh"><span class="mt">sun.misc...</span></div><div class="c cd wh"><span class="dp">11</span></div></div>
<div class="row" style="top:176px"><div class="c cn wh"><span class="nt">http–nio–8401–exec–882</span></div><div class="c cs sw"><svg class="sico" width="16" height="16"><use href="#iwait"/></svg><span class="st">Waiting...</span></div><div class="c ci wh"><span class="nid">0x559c</span></div><div class="c cm g"><span class="mt">sun.misc...</span></div><div class="c cd g"><span class="dp">137</span></div></div>
<div class="row" style="top:192px"><div class="c cn g"><svg class="ico" width="16" height="16"><use href="#imon"/></svg><span class="nt2">http–nio–8401–exec–881</span></div><div class="c cs sm"><svg class="sico" width="16" height="16"><use href="#imon"/></svg><span class="st">Waiting...</span></div><div class="c ci g"><span class="nid">0x559b</span></div><div class="c cm wh"><span class="mt">sun.secu...</span></div><div class="c cd wh"><span class="dp">123</span></div></div>
<div class="row" style="top:208px"><div class="c cn wh"><span class="nt">http–nio–8401–exec–880</span></div><div class="c cs sw"><svg class="sico" width="16" height="16"><use href="#iwait"/></svg><span class="st">Waiting...</span></div><div class="c ci wh"><span class="nid">0x559a</span></div><div class="c cm g"><span class="mt">sun.misc...</span></div><div class="c cd g"><span class="dp">137</span></div></div>
<div class="row" style="top:224px"><div class="c cn g"><span class="nt">http–nio–8401–exec–879</span></div><div class="c cs sw"><svg class="sico" width="16" height="16"><use href="#iwait"/></svg><span class="st">Waiting...</span></div><div class="c ci g"><span class="nid">0x5599</span></div><div class="c cm wh"><span class="mt">sun.misc...</span></div><div class="c cd wh"><span class="dp">11</span></div></div>
<div class="row" style="top:240px"><div class="c cn wh"><span class="nt">http–nio–8401–exec–878</span></div><div class="c cs sw"><svg class="sico" width="16" height="16"><use href="#iwait"/></svg><span class="st">Waiting...</span></div><div class="c ci wh"><span class="nid">0x5598</span></div><div class="c cm g"><span class="mt">sun.misc...</span></div><div class="c cd g"><span class="dp">11</span></div></div>
<div class="row" style="top:256px"><div class="c cn g"><span class="nt">http–nio–8401–exec–877</span></div><div class="c cs sr"><svg class="sico" width="16" height="16"><use href="#irun"/></svg><span class="st">Runnable</span></div><div class="c ci g"><span class="nid">0x554b</span></div><div class="c cm wh"><span class="mt">org.sprin...</span></div><div class="c cd wh"><span class="dp">104</span></div></div>
<div class="row" style="top:272px"><div class="c cn wh"><span class="nt">http–nio–8401–exec–876</span></div><div class="c cs sw"><svg class="sico" width="16" height="16"><use href="#iwait"/></svg><span class="st">Waiting...</span></div><div class="c ci wh"><span class="nid">0x554a</span></div><div class="c cm g"><span class="mt">sun.misc...</span></div><div class="c cd g"><span class="dp">11</span></div></div>
<div class="row" style="top:288px"><div class="c cn g"><svg class="ico" width="16" height="16"><use href="#imon"/></svg><span class="nt2">http–nio–8401–exec–875</span></div><div class="c cs sm"><svg class="sico" width="16" height="16"><use href="#imon"/></svg><span class="st">Waiting...</span></div><div class="c ci g"><span class="nid">0x5549</span></div><div class="c cm wh"><span class="mt">sun.secu...</span></div><div class="c cd wh"><span class="dp">123</span></div></div>
<div class="row" style="top:304px"><div class="c cn wh"><span class="nt">http–nio–8401–exec–874</span></div><div class="c cs sw"><svg class="sico" width="16" height="16"><use href="#iwait"/></svg><span class="st">Waiting...</span></div><div class="c ci wh"><span class="nid">0x5548</span></div><div class="c cm g"><span class="mt">sun.misc...</span></div><div class="c cd g"><span class="dp">11</span></div></div>
<div class="row" style="top:320px"><div class="c cn g"><span class="nt">http–nio–8401–exec–873</span></div><div class="c cs sw"><svg class="sico" width="16" height="16"><use href="#iwait"/></svg><span class="st">Waiting...</span></div><div class="c ci g"><span class="nid">0x5547</span></div><div class="c cm wh"><span class="mt">sun.misc...</span></div><div class="c cd wh"><span class="dp">11</span></div></div>
<div class="row" style="top:336px"><div class="c cn wh"><span class="nt">http–nio–8401–exec–872</span></div><div class="c cs sw"><svg class="sico" width="16" height="16"><use href="#iwait"/></svg><span class="st">Waiting...</span></div><div class="c ci wh"><span class="nid">0x5546</span></div><div class="c cm g"><span class="mt">sun.misc...</span></div><div class="c cd g"><span class="dp">11</span></div></div>
<div class="row sel" style="top:352px"><div class="c cn g"><svg class="ico" width="16" height="16"><use href="#iselmon"/></svg><span class="nt2">http–nio–8401–exec–871</span></div><div class="c cs sm"><svg class="sico" width="16" height="16"><use href="#imon"/></svg><span class="st">Waiting...</span></div><div class="c ci g"><span class="nid">0x5545</span></div><div class="c cm wh"><span class="mt">sun.secu...</span></div><div class="c cd wh"><span class="dp">123</span></div></div>
<div class="row" style="top:368px"><div class="c cn wh"><span class="nt">http–nio–8401–exec–870</span></div><div class="c cs sw"><svg class="sico" width="16" height="16"><use href="#iwait"/></svg><span class="st">Waiting...</span></div><div class="c ci wh"><span class="nid">0x5544</span></div><div class="c cm g"><span class="mt">sun.misc...</span></div><div class="c cd g"><span class="dp">11</span></div></div>
<div class="row" style="top:384px"><div class="c cn g"><span class="nt">http–nio–8401–exec–869</span></div><div class="c cs sw"><svg class="sico" width="16" height="16"><use href="#iwait"/></svg><span class="st">Waiting...</span></div><div class="c ci g"><span class="nid">0x5543</span></div><div class="c cm wh"><span class="mt">sun.misc...</span></div><div class="c cd wh"><span class="dp">11</span></div></div>
<div class="row" style="top:400px"><div class="c cn wh"><span class="nt">http–nio–8401–exec–868</span></div><div class="c cs sw"><svg class="sico" width="16" height="16"><use href="#iwait"/></svg><span class="st">Waiting...</span></div><div class="c ci wh"><span class="nid">0x5542</span></div><div class="c cm g"><span class="mt">sun.misc...</span></div><div class="c cd g"><span class="dp">11</span></div></div>
<div class="row" style="top:416px"><div class="c cn g"><span class="nt">http–nio–8401–exec–867</span></div><div class="c cs sw"><svg class="sico" width="16" height="16"><use href="#iwait"/></svg><span class="st">Waiting...</span></div><div class="c ci g"><span class="nid">0x5541</span></div><div class="c cm wh"><span class="mt">sun.misc...</span></div><div class="c cd wh"><span class="dp">11</span></div></div>
<div class="row" style="top:432px"><div class="c cn wh"><span class="nt">http–nio–8401–exec–866</span></div><div class="c cs sw"><svg class="sico" width="16" height="16"><use href="#iwait"/></svg><span class="st">Waiting...</span></div><div class="c ci wh"><span class="nid">0x5540</span></div><div class="c cm g"><span class="mt">sun.misc...</span></div><div class="c cd g"><span class="dp">11</span></div></div>
<div class="row" style="top:448px"><div class="c cn g"><span class="nt">http–nio–8401–exec–865</span></div><div class="c cs sw"><svg class="sico" width="16" height="16"><use href="#iwait"/></svg><span class="st">Waiting...</span></div><div class="c ci g"><span class="nid">0x553f</span></div><div class="c cm wh"><span class="mt">sun.misc...</span></div><div class="c cd wh"><span class="dp">137</span></div></div>
<div class="row" style="top:464px"><div class="c cn wh"><span class="nt">http–nio–8401–exec–864</span></div><div class="c cs sw"><svg class="sico" width="16" height="16"><use href="#iwait"/></svg><span class="st">Waiting...</span></div><div class="c ci wh"><span class="nid">0x553d</span></div><div class="c cm g"><span class="mt">sun.misc...</span></div><div class="c cd g"><span class="dp">11</span></div></div>
<div class="row" style="top:480px"><div class="c cn g"><span class="nt">http–nio–8401–exec–863</span></div><div class="c cs sw"><svg class="sico" width="16" height="16"><use href="#iwait"/></svg><span class="st">Waiting...</span></div><div class="c ci g"><span class="nid">0x553b</span></div><div class="c cm wh"><span class="mt">sun.misc...</span></div><div class="c cd wh"><span class="dp">11</span></div></div>
<div class="row" style="top:496px"><div class="c cn wh"><svg class="ico" width="16" height="16"><use href="#imon"/></svg><span class="nt2">http–nio–8401–exec–862</span></div><div class="c cs sm"><svg class="sico" width="16" height="16"><use href="#imon"/></svg><span class="st">Waiting...</span></div><div class="c ci wh"><span class="nid">0x553a</span></div><div class="c cm g"><span class="mt">sun.secu...</span></div><div class="c cd g"><span class="dp">123</span></div></div>
<div class="row" style="top:512px"><div class="c cn g"><span class="nt">http–nio–8401–exec–861</span></div><div class="c cs sw"><svg class="sico" width="16" height="16"><use href="#iwait"/></svg><span class="st">Waiting...</span></div><div class="c ci g"><span class="nid">0x5539</span></div><div class="c cm wh"><span class="mt">sun.misc...</span></div><div class="c cd wh"><span class="dp">11</span></div></div>
<div class="row" style="top:528px"><div class="c cn wh"><span class="nt">http–nio–8401–exec–860</span></div><div class="c cs sw"><svg class="sico" width="16" height="16"><use href="#iwait"/></svg><span class="st">Waiting...</span></div><div class="c ci wh"><span class="nid">0x5538</span></div><div class="c cm g"><span class="mt">sun.misc...</span></div><div class="c cd g"><span class="dp">11</span></div></div>
<div class="row" style="top:544px"><div class="c cn g"><svg class="ico" width="16" height="16"><use href="#imon"/></svg><span class="nt2">http–nio–8401–exec–859</span></div><div class="c cs sm"><svg class="sico" width="16" height="16"><use href="#imon"/></svg><span class="st">Waiting...</span></div><div class="c ci g"><span class="nid">0x5536</span></div><div class="c cm wh"><span class="mt">sun.secu...</span></div><div class="c cd wh"><span class="dp">123</span></div></div>
<div class="row" style="top:560px"><div class="c cn wh"><span class="nt">http–nio–8401–exec–858</span></div><div class="c cs sw"><svg class="sico" width="16" height="16"><use href="#iwait"/></svg><span class="st">Waiting...</span></div><div class="c ci wh"><span class="nid">0x5535</span></div><div class="c cm g"><span class="mt">sun.misc...</span></div><div class="c cd g"><span class="dp">11</span></div></div>
<div class="row" style="top:576px"><div class="c cn g"><svg class="ico" width="16" height="16"><use href="#imon"/></svg><span class="nt2">http–nio–8401–exec–857</span></div><div class="c cs sm"><svg class="sico" width="16" height="16"><use href="#imon"/></svg><span class="st">Waiting...</span></div><div class="c ci g"><span class="nid">0x5534</span></div><div class="c cm wh"><span class="mt">sun.secu...</span></div><div class="c cd wh"><span class="dp">123</span></div></div>
<div class="row" style="top:592px"><div class="c cn wh"><span class="nt">http–nio–8401–exec–856</span></div><div class="c cs sw"><svg class="sico" width="16" height="16"><use href="#iwait"/></svg><span class="st">Waiting...</span></div><div class="c ci wh"><span class="nid">0x5533</span></div><div class="c cm g"><span class="mt">sun.misc...</span></div><div class="c cd g"><span class="dp">11</span></div></div>
<div class="row" style="top:608px"><div class="c cn g"><span class="nt">http–nio–8401–exec–855</span></div><div class="c cs sw"><svg class="sico" width="16" height="16"><use href="#iwait"/></svg><span class="st">Waiting...</span></div><div class="c ci g"><span class="nid">0x5531</span></div><div class="c cm wh"><span class="mt">sun.misc...</span></div><div class="c cd wh"><span class="dp">11</span></div></div>
<div class="row" style="top:624px"><div class="c cn wh"><span class="nt">http–nio–8401–exec–854</span></div><div class="c cs sw"><svg class="sico" width="16" height="16"><use href="#iwait"/></svg><span class="st">Waiting...</span></div><div class="c ci wh"><span class="nid">0x552f</span></div><div class="c cm g"><span class="mt">sun.misc...</span></div><div class="c cd g"><span class="dp">11</span></div></div>
<div class="row" style="top:640px"><div class="c cn g"><span class="nt">http–nio–8401–exec–853</span></div><div class="c cs sw"><svg class="sico" width="16" height="16"><use href="#iwait"/></svg><span class="st">Waiting...</span></div><div class="c ci g"><span class="nid">0x552e</span></div><div class="c cm wh"><span class="mt">sun.misc...</span></div><div class="c cd wh"><span class="dp">11</span></div></div>
<div class="row" style="top:656px"><div class="c cn wh"><svg class="ico" width="16" height="16"><use href="#imon"/></svg><span class="nt2">http–nio–8401–exec–852</span></div><div class="c cs sm"><svg class="sico" width="16" height="16"><use href="#imon"/></svg><span class="st">Waiting...</span></div><div class="c ci wh"><span class="nid">0x552d</span></div><div class="c cm g"><span class="mt">sun.secu...</span></div><div class="c cd g"><span class="dp">123</span></div></div>
<div class="row" style="top:672px"><div class="c cn g"><span class="nt">http–nio–8401–exec–851</span></div><div class="c cs sw"><svg class="sico" width="16" height="16"><use href="#iwait"/></svg><span class="st">Waiting...</span></div><div class="c ci g"><span class="nid">0x552b</span></div><div class="c cm wh"><span class="mt">sun.misc...</span></div><div class="c cd wh"><span class="dp">11</span></div></div>
<div class="row" style="top:688px"><div class="c cn wh"><span class="nt">http–nio–8401–exec–850</span></div><div class="c cs sw"><svg class="sico" width="16" height="16"><use href="#iwait"/></svg><span class="st">Waiting...</span></div><div class="c ci wh"><span class="nid">0x552a</span></div><div class="c cm g"><span class="mt">sun.misc...</span></div><div class="c cd g"><span class="dp">11</span></div></div>
<div class="row" style="top:704px"><div class="c cn g"><span class="nt">http–nio–8401–exec–849</span></div><div class="c cs sw"><svg class="sico" width="16" height="16"><use href="#iwait"/></svg><span class="st">Waiting...</span></div><div class="c ci g"><span class="nid">0x5529</span></div><div class="c cm wh"><span class="mt">sun.misc...</span></div><div class="c cd wh"><span class="dp">11</span></div></div>
<div class="row" style="top:720px"><div class="c cn wh"><span class="nt">http–nio–8401–exec–848</span></div><div class="c cs sr"><svg class="sico" width="16" height="16"><use href="#irun"/></svg><span class="st">Runnable</span></div><div class="c ci wh"><span class="nid">0x5528</span></div><div class="c cm g"><span class="mt">java.lang...</span></div><div class="c cd g"><span class="dp">96</span></div></div>
<div class="row" style="top:736px"><div class="c cn g"><span class="nt">http–nio–8401–exec–847</span></div><div class="c cs sw"><svg class="sico" width="16" height="16"><use href="#iwait"/></svg><span class="st">Waiting...</span></div><div class="c ci g"><span class="nid">0x5527</span></div><div class="c cm wh"><span class="mt">sun.misc...</span></div><div class="c cd wh"><span class="dp">11</span></div></div>
<div class="row" style="top:752px"><div class="c cn wh"><svg class="ico" width="16" height="16"><use href="#imon"/></svg><span class="nt2">http–nio–8401–exec–846</span></div><div class="c cs sm"><svg class="sico" width="16" height="16"><use href="#imon"/></svg><span class="st">Waiting...</span></div><div class="c ci wh"><span class="nid">0x5526</span></div><div class="c cm g"><span class="mt">sun.secu...</span></div><div class="c cd g"><span class="dp">123</span></div></div>
<div class="row" style="top:768px"><div class="c cn g"><span class="nt">http–nio–8401–exec–845</span></div><div class="c cs sw"><svg class="sico" width="16" height="16"><use href="#iwait"/></svg><span class="st">Waiting...</span></div><div class="c ci g"><span class="nid">0x5525</span></div><div class="c cm wh"><span class="mt">sun.misc...</span></div><div class="c cd wh"><span class="dp">11</span></div></div>
<div class="row" style="top:784px"><div class="c cn wh"><span class="nt">http–nio–8401–exec–844</span></div><div class="c cs sw"><svg class="sico" width="16" height="16"><use href="#iwait"/></svg><span class="st">Waiting...</span></div><div class="c ci wh"><span class="nid">0x5524</span></div><div class="c cm g"><span class="mt">sun.misc...</span></div><div class="c cd g"><span class="dp">137</span></div></div>
<div class="row" style="top:800px"><div class="c cn g"><span class="nt">http–nio–8401–exec–843</span></div><div class="c cs sw"><svg class="sico" width="16" height="16"><use href="#iwait"/></svg><span class="st">Waiting...</span></div><div class="c ci g"><span class="nid">0x5522</span></div><div class="c cm wh"><span class="mt">sun.misc...</span></div><div class="c cd wh"><span class="dp">11</span></div></div>
<div class="row" style="top:816px"><div class="c cn wh"><span class="nt">http–nio–8401–exec–842</span></div><div class="c cs sr"><svg class="sico" width="16" height="16"><use href="#irun"/></svg><span class="st">Runnable</span></div><div class="c ci wh"><span class="nid">0x5520</span></div><div class="c cm g"><span class="mt">sun.misc...</span></div><div class="c cd g"><span class="dp">137</span></div></div>
<div class="row" style="top:832px"><div class="c cn g"><span class="nt">http–nio–8401–exec–841</span></div><div class="c cs sw"><svg class="sico" width="16" height="16"><use href="#iwait"/></svg><span class="st">Waiting...</span></div><div class="c ci g"><span class="nid">0x551f</span></div><div class="c cm wh"><span class="mt">sun.misc...</span></div><div class="c cd wh"><span class="dp">137</span></div></div>
<div class="row" style="top:848px"><div class="c cn wh"><span class="nt">http–nio–8401–exec–840</span></div><div class="c cs sw"><svg class="sico" width="16" height="16"><use href="#iwait"/></svg><span class="st">Waiting...</span></div><div class="c ci wh"><span class="nid">0x551d</span></div><div class="c cm g"><span class="mt">sun.misc...</span></div><div class="c cd g"><span class="dp">11</span></div></div>
<div class="row" style="top:864px"><div class="c cn g"><svg class="ico" width="16" height="16"><use href="#imon"/></svg><span class="nt2">http–nio–8401–exec–839</span></div><div class="c cs sm"><svg class="sico" width="16" height="16"><use href="#imon"/></svg><span class="st">Waiting...</span></div><div class="c ci g"><span class="nid">0x551b</span></div><div class="c cm wh"><span class="mt">sun.secu...</span></div><div class="c cd wh"><span class="dp">123</span></div></div>
<div class="row" style="top:880px"><div class="c cn wh"><span class="nt">http–nio–8401–exec–838</span></div><div class="c cs sw"><svg class="sico" width="16" height="16"><use href="#iwait"/></svg><span class="st">Waiting...</span></div><div class="c ci wh"><span class="nid">0x551a</span></div><div class="c cm g"><span class="mt">sun.misc...</span></div><div class="c cd g"><span class="dp">137</span></div></div>
</div>
<div id="wlist">
<div class="li" style="top:0px">http–nio–8401–exec–762</div>
<div class="li" style="top:19px">http–nio–8401–exec–763</div>
<div class="li" style="top:38px">http–nio–8401–exec–766</div>
<div class="li" style="top:57px">http–nio–8401–exec–767</div>
<div class="li" style="top:76px">http–nio–8401–exec–771</div>
<div class="li" style="top:95px">http–nio–8401–exec–772</div>
<div class="li" style="top:114px">http–nio–8401–exec–774</div>
<div class="li" style="top:133px">http–nio–8401–exec–785</div>
<div class="li" style="top:152px">http–nio–8401–exec–789</div>
<div class="li" style="top:171px">http–nio–8401–exec–796</div>
<div class="li" style="top:190px">http–nio–8401–exec–801</div>
<div class="li" style="top:209px">http–nio–8401–exec–804</div>
<div class="li" style="top:228px">http–nio–8401–exec–805</div>
<div class="li" style="top:247px">http–nio–8401–exec–807</div>
<div class="li" style="top:266px">http–nio–8401–exec–812</div>
<div class="li" style="top:285px">http–nio–8401–exec–818</div>
<div class="li" style="top:304px">http–nio–8401–exec–821</div>
<div class="li" style="top:323px">http–nio–8401–exec–839</div>
<div class="li" style="top:342px">http–nio–8401–exec–846</div>
<div class="li" style="top:361px">http–nio–8401–exec–852</div>
<div class="li" style="top:380px">http–nio–8401–exec–857</div>
<div class="li" style="top:399px">http–nio–8401–exec–859</div>
<div class="li" style="top:418px">http–nio–8401–exec–862</div>
<div class="li" style="top:437px">http–nio–8401–exec–875</div>
<div class="li" style="top:456px">http–nio–8401–exec–881</div>
<div class="li" style="top:475px">http–nio–8401–exec–886</div>
</div>
<div id="rpane" class="a"></div>
<div id="rclip" class="a" style="left:778px;top:106px;width:1116px;height:921px;overflow:hidden;background:#fff">
<div class="a" style="left:6px;top:4px;width:1104px;height:1200px;border-top:1px solid #c0c0c0;border-left:1px solid #c0c0c0;border-right:1px solid #000"></div>
<div class="cell" style="left:10px;top:8px;width:89px;height:38px"></div>
<div class="cell" style="left:101px;top:8px;width:1005px;height:38px"></div>
<div class="cell" style="left:10px;top:48px;width:89px;height:23px"></div>
<div class="cell" style="left:101px;top:48px;width:1005px;height:23px"></div>
<div class="cell" style="left:10px;top:73px;width:89px;height:23px"></div>
<div class="cell" style="left:101px;top:73px;width:1005px;height:23px"></div>
<div class="cell" style="left:10px;top:98px;width:89px;height:1100px"></div>
<div class="cell" style="left:101px;top:98px;width:1005px;height:1100px"></div>
<div class="a" style="left:11px;top:12px;width:87px;text-align:center;font-weight:bold;line-height:15px">Thread<br>Name</div>
<div class="a" style="left:102px;top:19px;width:1003px;text-align:center;font-weight:bold;line-height:15px;letter-spacing:0.75px">http-nio-8401-exec-871</div>
<div class="a" style="left:14px;top:52px;font-weight:bold;line-height:15px">State</div>
<div class="a" style="left:105px;top:52px;line-height:15px">Waiting on monitor</div>
<div class="a" style="left:14px;top:77px;font-weight:bold;line-height:15px">Monitor</div>
<div class="a" style="left:105px;top:77px;line-height:15px;letter-spacing:0.2px">Owns Monitor Lock on 0x000000071ddad410</div>
<div id="stack">
<div class="sl" style="top:0px;letter-spacing:-0.152px">at sun.security.rsa.RSACore$BlindingParameters.getBlindingRandomPair(RSACore.java:404)</div>
<div class="sl" style="top:15px;letter-spacing:0.096px">– locked [0x000000071ddad410] (a sun.security.rsa.RSACore$BlindingParameters)</div>
<div class="sl" style="top:30px;letter-spacing:-0.167px">at sun.security.rsa.RSACore.getBlindingRandomPair(RSACore.java:443)</div>
<div class="sl" style="top:45px;letter-spacing:-0.134px">at sun.security.rsa.RSACore.crtCrypt(RSACore.java:178)</div>
<div class="sl" style="top:60px;letter-spacing:-0.16px">at sun.security.rsa.RSACore.rsa(RSACore.java:122)</div>
<div class="sl" style="top:75px;letter-spacing:-0.222px">at sun.security.rsa.RSASignature.engineSign(RSASignature.java:175)</div>
<div class="sl" style="top:90px;letter-spacing:-0.061px">at java.security.Signature$Delegate.engineSign(Signature.java:1210)</div>
<div class="sl" style="top:105px">at java.security.Signature.sign(Signature.java:582)</div>
<div class="sl" style="top:120px">at org.springframework.security.jwt.crypto.sign.RsaSigner.sign(RsaSigner.java:56)</div>
<div class="sl" style="top:135px;letter-spacing:0.085px">at org.springframework.security.jwt.JwtHelper.encode(JwtHelper.java:101)</div>
<div class="sl" style="top:150px;letter-spacing:0.077px">at org.springframework.security.jwt.JwtHelper.encode(JwtHelper.java:93)</div>
<div class="sl" style="top:165px;letter-spacing:0.023px">at org.springframework.security.oauth2.provider.token.store.JwtAccessTokenConverter.encode(JwtAccessTokenConverter.java:271)</div>
<div class="sl" style="top:180px">at org.springframework.security.oauth2.provider.token.store.JwtAccessTokenConverter.enhance(JwtAccessTokenConverter.java:226)</div>
<div class="sl" style="top:195px;letter-spacing:0.022px">at org.springframework.security.oauth2.provider.token.TokenEnhancerChain.enhance(TokenEnhancerChain.java:47)</div>
<div class="sl" style="top:210px;letter-spacing:0.036px">at org.springframework.security.oauth2.provider.token.DefaultTokenServices.createAccessToken(DefaultTokenServices.java:301)</div>
<div class="sl" style="top:225px;letter-spacing:0.036px">at org.springframework.security.oauth2.provider.token.DefaultTokenServices.createAccessToken(DefaultTokenServices.java:121)</div>
<div class="sl" style="top:240px;letter-spacing:0.116px">at org.springframework.security.oauth2.provider.token.AbstractTokenGranter.getAccessToken(AbstractTokenGranter.java:72)</div>
<div class="sl" style="top:255px;letter-spacing:0.144px">at org.springframework.security.oauth2.provider.token.AbstractTokenGranter.grant(AbstractTokenGranter.java:67)</div>
<div class="sl" style="top:270px;letter-spacing:0.118px">at org.springframework.security.oauth2.provider.CompositeTokenGranter.grant(CompositeTokenGranter.java:38)</div>
<div class="sl" style="top:285px">at org.springframework.security.oauth2.config.annotation.web.configurers.AuthorizationServerEndpointsConfigurer$4.grant(AuthorizationServerEndpointsConfigurer.java:</div>
<div class="sl" style="top:300px">583)</div>
<div class="sl" style="top:315px;letter-spacing:0.119px">at org.springframework.security.oauth2.provider.endpoint.TokenEndpoint.postAccessToken(TokenEndpoint.java:132)</div>
<div class="sl" style="top:330px;letter-spacing:0.027px">at com.dunshan.mall.auth.controller.AuthController.postAccessToken$original$sWMe48t2(AuthController.java:46)</div>
<div class="sl" style="top:345px;letter-spacing:-0.034px">at com.dunshan.mall.auth.controller.AuthController.postAccessToken$original$sWMe48t2$accessor$jl0WbQJB(AuthController.java)</div>
<div class="sl" style="top:360px">at com.dunshan.mall.auth.controller.AuthController$auxiliary$z8kF9l34.call(Unknown Source)</div>
<div class="sl" style="top:375px;letter-spacing:0.042px">at org.apache.skywalking.apm.agent.core.plugin.interceptor.enhance.InstMethodsInter.intercept(InstMethodsInter.java:86)</div>
<div class="sl" style="top:390px">at com.dunshan.mall.auth.controller.AuthController.postAccessToken(AuthController.java)</div>
<div class="sl" style="top:405px;letter-spacing:-0.092px">at sun.reflect.GeneratedMethodAccessor185.invoke(Unknown Source)</div>
<div class="sl" style="top:420px;letter-spacing:-0.047px">at sun.reflect.DelegatingMethodAccessorImpl.invoke(DelegatingMethodAccessorImpl.java:43)</div>
<div class="sl" style="top:435px;letter-spacing:0.068px">at java.lang.reflect.Method.invoke(Method.java:498)</div>
<div class="sl" style="top:450px;letter-spacing:0.059px">at org.springframework.web.method.support.InvocableHandlerMethod.doInvoke(InvocableHandlerMethod.java:190)</div>
<div class="sl" style="top:465px;letter-spacing:0.032px">at org.springframework.web.method.support.InvocableHandlerMethod.invokeForRequest(InvocableHandlerMethod.java:138)</div>
<div class="sl" style="top:480px">at org.springframework.web.servlet.mvc.method.annotation.ServletInvocableHandlerMethod.invokeAndHandle(ServletInvocableHandlerMethod.java:105)</div>
<div class="sl" style="top:495px;letter-spacing:0.067px">at org.springframework.web.servlet.mvc.method.annotation.RequestMappingHandlerAdapter.invokeHandlerMethod(RequestMappingHandlerAdapter.java:879)</div>
<div class="sl" style="top:510px;letter-spacing:0.072px">at org.springframework.web.servlet.mvc.method.annotation.RequestMappingHandlerAdapter.handleInternal(RequestMappingHandlerAdapter.java:793)</div>
<div class="sl" style="top:525px;letter-spacing:0.103px">at org.springframework.web.servlet.mvc.method.AbstractHandlerMethodAdapter.handle(AbstractHandlerMethodAdapter.java:87)</div>
<div class="sl" style="top:540px;letter-spacing:0.03px">at org.springframework.web.servlet.DispatcherServlet.doDispatch(DispatcherServlet.java:1040)</div>
<div class="sl" style="top:555px">at org.springframework.web.servlet.DispatcherServlet.doService(DispatcherServlet.java:943)</div>
<div class="sl" style="top:570px">at org.springframework.web.servlet.FrameworkServlet.processRequest(FrameworkServlet.java:1006)</div>
<div class="sl" style="top:585px;letter-spacing:-0.019px">at org.springframework.web.servlet.FrameworkServlet.doPost(FrameworkServlet.java:909)</div>
<div class="sl" style="top:600px;letter-spacing:0.042px">at javax.servlet.http.HttpServlet.service(HttpServlet.java:660)</div>
<div class="sl" style="top:615px">at org.springframework.web.servlet.FrameworkServlet.service(FrameworkServlet.java:883)</div>
<div class="sl" style="top:630px;letter-spacing:0.042px">at javax.servlet.http.HttpServlet.service(HttpServlet.java:741)</div>
<div class="sl" style="top:645px;letter-spacing:-0.023px">at org.apache.catalina.core.ApplicationFilterChain.internalDoFilter(ApplicationFilterChain.java:231)</div>
<div class="sl" style="top:660px">at org.apache.catalina.core.ApplicationFilterChain.doFilter(ApplicationFilterChain.java:166)</div>
<div class="sl" style="top:675px;letter-spacing:-0.021px">at org.apache.tomcat.websocket.server.WsFilter.doFilter(WsFilter.java:53)</div>
<div class="sl" style="top:690px;letter-spacing:-0.018px">at org.apache.catalina.core.ApplicationFilterChain.internalDoFilter(ApplicationFilterChain.java:193)</div>
<div class="sl" style="top:705px">at org.apache.catalina.core.ApplicationFilterChain.doFilter(ApplicationFilterChain.java:166)</div>
<div class="sl" style="top:720px;letter-spacing:0.046px">at com.alibaba.druid.support.http.WebStatFilter.doFilter(WebStatFilter.java:123)</div>
<div class="sl" style="top:735px;letter-spacing:-0.018px">at org.apache.catalina.core.ApplicationFilterChain.internalDoFilter(ApplicationFilterChain.java:193)</div>
<div class="sl" style="top:750px">at org.apache.catalina.core.ApplicationFilterChain.doFilter(ApplicationFilterChain.java:166)</div>
<div class="sl" style="top:765px">at org.springframework.security.web.FilterChainProxy$VirtualFilterChain.doFilter(FilterChainProxy.java:320)</div>
<div class="sl" style="top:780px;letter-spacing:0.017px">at org.springframework.security.web.access.intercept.FilterSecurityInterceptor.invoke(FilterSecurityInterceptor.java:126)</div>
<div class="sl" style="top:795px;letter-spacing:0.013px">at org.springframework.security.web.access.intercept.FilterSecurityInterceptor.doFilter(FilterSecurityInterceptor.java:90)</div>
<div class="sl" style="top:810px">at org.springframework.security.web.FilterChainProxy$VirtualFilterChain.doFilter(FilterChainProxy.java:334)</div>
</div>
</div>
<div class="a" style="left:1894px;top:106px;width:15px;height:921px;background:linear-gradient(90deg,#dcdcdc,#f4f4f4 35%,#f8f8f8 55%,#e4e4e4 85%,#d0d0d0);border-left:1px solid #c4c4c4;overflow:hidden"><div class="a" style="left:0;top:17px;width:14px;height:887px;background:linear-gradient(180deg,rgba(60,62,70,.35),rgba(60,62,70,0) 7px,rgba(60,62,70,0) calc(100% - 7px),rgba(60,62,70,.35)),linear-gradient(90deg,#9c9ea4,#c4c6cb 18%,#d6d8dc 45%,#d9dbde 70%,#c9cbcf);border-radius:0 14px 14px 0/0 9px 9px 0"></div><div class="a" style="left:0;top:17px;width:14px;height:402px;background:linear-gradient(90deg,#a8bfd8,#bcd1e7 20%,#c8dcef 45%,#e2f0fb 78%,#cfe2f3 92%,#9fb8d4);border:1px solid #233a64;border-left:none;border-radius:0 14px 14px 0/0 10px 10px 0"></div><div class="arr" style="left:3px;top:4px;border-left:4px solid transparent;border-right:4px solid transparent;border-bottom:7px solid #454545"></div><div class="arr" style="left:3px;top:909px;border-left:4px solid transparent;border-right:4px solid transparent;border-top:7px solid #454545"></div></div>
<div id="status" class="a"><div class="a box"></div><div class="a" style="left:6px;top:1px;line-height:15px;letter-spacing:-0.45px">Status</div></div>
</body></html>
